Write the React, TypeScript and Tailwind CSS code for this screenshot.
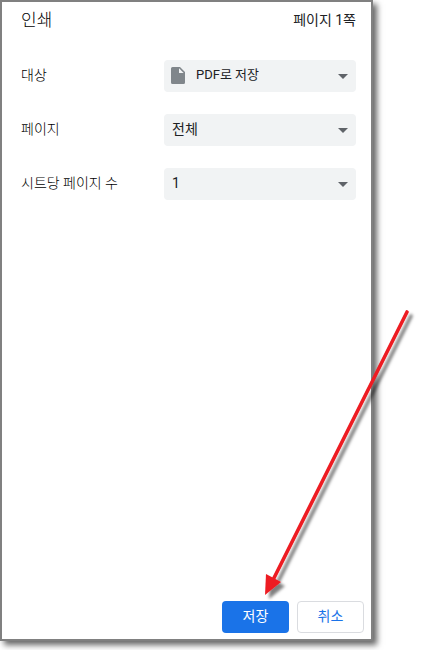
import React from 'react';

interface SettingRowProps {
  id: string;
  label: string;
  options: string[];
  icon?: React.ReactNode;
}

const FileIcon: React.FC = () => (
  <svg viewBox="0 0 14 17" className="h-[17px] w-[14px]" aria-hidden="true">
    <path d="M1.5 0H9l5 5v10.5a1.5 1.5 0 0 1-1.5 1.5h-11A1.5 1.5 0 0 1 0 15.5v-14A1.5 1.5 0 0 1 1.5 0z" fill="#80868b" />
    <path d="M8 1.3V6h4.7z" fill="#f1f3f4" />
  </svg>
);

const SettingRow: React.FC<SettingRowProps> = ({ id, label, options, icon }) => (
  <div className="flex items-center">
    <label htmlFor={id} className="w-[143px] shrink-0 pb-0.5 text-sm font-light text-black">
      {label}
    </label>
    <div className="relative h-8 min-w-0 flex-1">
      <select
        id={id}
        className={`h-8 w-full appearance-none rounded bg-[#f1f3f4] pr-7 pb-0.5 ${icon ? 'pl-8 text-[13px]' : 'pl-2 text-sm'}`}
      >
        {options.map((option) => (
          <option key={option}>{option}</option>
        ))}
      </select>
      {icon && <span className="pointer-events-none absolute top-[7px] left-[7px]">{icon}</span>}
      <svg viewBox="0 0 10 5" className="pointer-events-none absolute top-3.5 right-2 h-[5px] w-[10px]" aria-hidden="true">
        <path d="M0 0h10L5 5z" fill="#5f6368" />
      </svg>
    </div>
  </div>
);

const SaveArrow: React.FC = () => (
  <svg
    viewBox="0 0 160 300"
    className="pointer-events-none absolute right-3 bottom-[45px] h-[300px] w-[160px]"
    aria-hidden="true"
  >
    <defs>
      <filter id="arrow-shadow" x="-20%" y="-20%" width="140%" height="140%">
        <feDropShadow dx="4" dy="4" stdDeviation="1.5" floodColor="#000" floodOpacity="0.5" />
      </filter>
    </defs>
    <g filter="url(#arrow-shadow)">
      <path d="M147 7L13 275" fill="none" stroke="#ed1c24" strokeWidth="3.6" strokeLinecap="round" />
      <path d="M5 290L6 269L21 277z" fill="#ed1c24" />
    </g>
  </svg>
);

const App: React.FC = () => {
  return (
    <div className="relative flex min-h-screen flex-col bg-white pr-[59px] pb-[9px] font-['Roboto','Noto_Sans_CJK_KR',sans-serif] text-[#202124]">
      <main className="flex flex-1 flex-col border-2 border-[#808080] shadow-[4px_4px_6px_rgba(0,0,0,0.6)]">
        <header className="flex h-9 items-center justify-between pr-[15px] pl-[19px]">
          <h1 className="pt-0.5 text-[17px] font-light text-black">인쇄</h1>
          <span className="text-sm">페이지 1쪽</span>
        </header>

        {/* Settings */}
        <div className="flex flex-1 flex-col gap-[22px] pt-[22px] pr-[15px] pl-[19px]">
          <SettingRow id="destination" label="대상" options={['PDF로 저장']} icon={<FileIcon />} />
          <SettingRow id="pages" label="페이지" options={['전체']} />
          <SettingRow id="per-sheet" label="시트당 페이지 수" options={['1']} />
        </div>

        {/* Actions */}
        <footer className="flex justify-end gap-2 pr-[7px] pb-1.5">
          <button type="button" className="h-8 w-[67px] rounded bg-[#1a73e8] pb-0.5 text-sm text-white">
            저장
          </button>
          <button type="button" className="h-8 w-[67px] rounded border border-[#dadce0] pb-0.5 text-sm text-[#1a73e8]">
            취소
          </button>
        </footer>
      </main>
      <SaveArrow />
    </div>
  );
};

export default App;
